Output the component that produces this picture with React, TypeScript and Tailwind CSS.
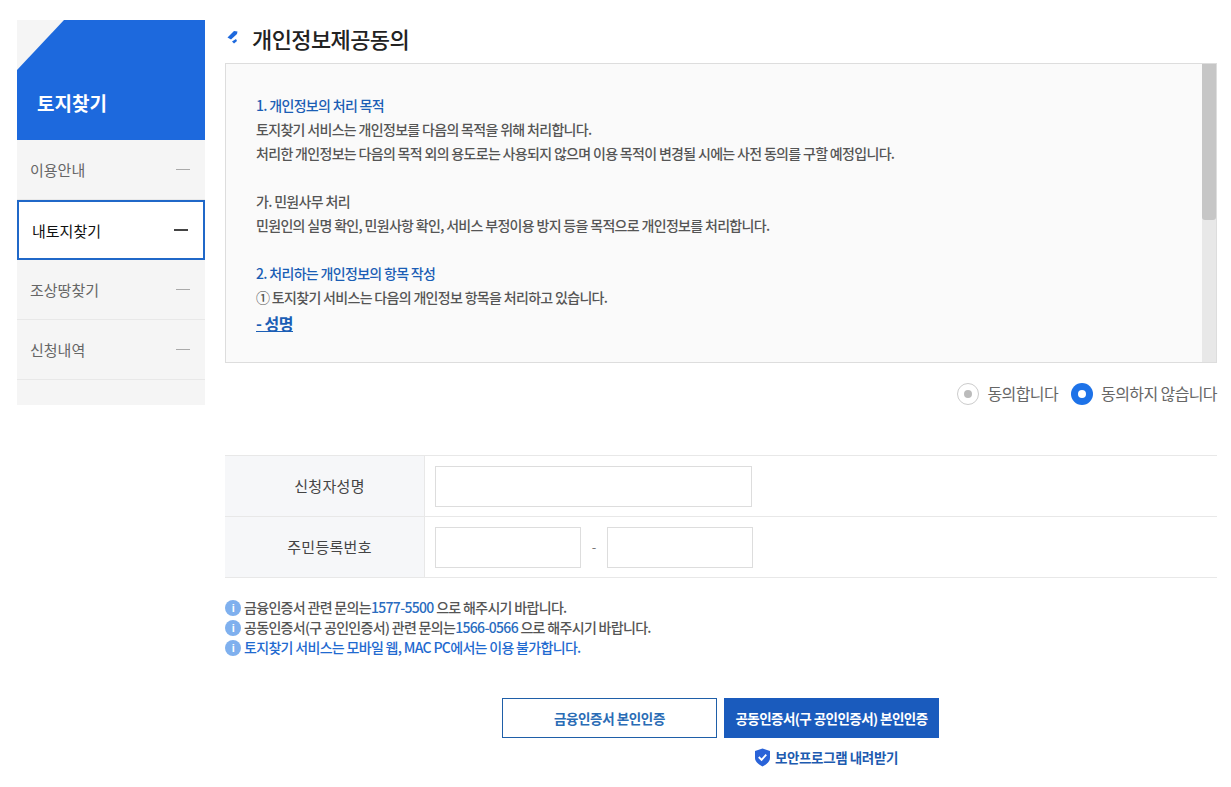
const font = "font-['Noto_Sans_CJK_KR','Noto_Sans',sans-serif]";

const menus = [
  { label: "이용안내", active: false },
  { label: "내토지찾기", active: true },
  { label: "조상땅찾기", active: false },
  { label: "신청내역", active: false },
];

function Sidebar() {
  return (
    <aside className="w-[188px] shrink-0 bg-[#f5f5f5] pb-[25px]">
      <div className="h-[120px] bg-[#1d69dd] [clip-path:polygon(47px_0,100%_0,100%_100%,0_100%,0_50px)] pt-[69px] pl-[20px] text-[19px] leading-[28px] font-bold text-white">
        토지찾기
      </div>
      {menus.map((m) =>
        m.active ? (
          <div
            key={m.label}
            className="flex h-[60px] items-center justify-between border-2 border-[#2068c8] bg-white pr-[15px] pl-[13px] text-[15px] text-[#111]"
          >
            <span className="pt-[2px]">{m.label}</span>
            <span className="h-[2px] w-[14px] bg-[#444]" />
          </div>
        ) : (
          <div
            key={m.label}
            className="flex h-[60px] items-center justify-between border-b border-[#e8e8e8] pr-[15px] pl-[13px] text-[15px] text-[#666]"
          >
            <span className="pt-[2px]">{m.label}</span>
            <span className="h-[1px] w-[14px] bg-[#aaa]" />
          </div>
        ),
      )}
    </aside>
  );
}

function Title() {
  return (
    <div className="flex h-[43px] items-start pt-[2px] pl-[2px]">
      <svg width="12" height="14" viewBox="0 0 12 14" className="mt-[8px]">
        <path d="M0.5 7.5 L7 1 L10.5 1.5 L10 4 L4 9.5 Z" fill="#1d69dd" />
        <path d="M5 11.5 L9 9 L10 11 L7 13.5 Z" fill="#1d69dd" />
      </svg>
      <h2 className="ml-[13px] text-[22px] leading-[32px] font-medium tracking-[-0.6px] text-[#222]">
        개인정보제공동의
      </h2>
    </div>
  );
}

function Terms() {
  return (
    <div className="flex h-[300px] border border-[#ddd] bg-[#fafafa]">
      <div className="flex-1 pt-[29px] pl-[30px] text-[14px] leading-[24px] font-medium tracking-[-0.68px] text-[#555]">
        <p className="text-[#1b5eb5]">1. 개인정보의 처리 목적</p>
        <p>토지찾기 서비스는 개인정보를 다음의 목적을 위해 처리합니다.</p>
        <p>처리한 개인정보는 다음의 목적 외의 용도로는 사용되지 않으며 이용 목적이 변경될 시에는 사전 동의를 구할 예정입니다.</p>
        <p className="mt-[24px]">가. 민원사무 처리</p>
        <p>민원인의 실명 확인, 민원사항 확인, 서비스 부정이용 방지 등을 목적으로 개인정보를 처리합니다.</p>
        <p className="mt-[24px] text-[#1b5eb5]">2. 처리하는 개인정보의 항목 작성</p>
        <p>① 토지찾기 서비스는 다음의 개인정보 항목을 처리하고 있습니다.</p>
        <p className="mt-[2px] text-[16px] font-bold tracking-[-0.5px] text-[#1b5eb5] underline">- 성명</p>
      </div>
      <div className="w-[14px] bg-[#e8e8e8]">
        <div className="h-[156px] rounded-b-[3px] bg-[#c6c6c6]" />
      </div>
    </div>
  );
}

function Agree() {
  return (
    <div className="mt-[20px] flex h-[22px] items-center justify-end text-[16px] leading-[22px] tracking-[-0.6px] text-[#666]">
      <span className="flex h-[22px] w-[22px] items-center justify-center rounded-full border border-[#ccc] bg-white">
        <span className="h-[8px] w-[8px] rounded-full bg-[#bbb]" />
      </span>
      <span className="mr-[13px] ml-[8px] pb-[2px]">동의합니다</span>
      <span className="flex h-[22px] w-[22px] items-center justify-center rounded-full bg-[#1d72e8]">
        <span className="h-[8px] w-[8px] rounded-full bg-white" />
      </span>
      <span className="ml-[8px] pb-[2px]">동의하지 않습니다</span>
    </div>
  );
}

function Field({ w }: { w: string }) {
  return <input className={`h-[41px] border border-[#ddd] bg-white ${w}`} />;
}

function FormTable() {
  return (
    <div className="mt-[50px] border-t border-[#e8e8e8]">
      <div className="flex h-[61px] border-b border-[#e8e8e8]">
        <div className="flex w-[200px] items-center justify-center border-r border-[#e8e8e8] bg-[#f6f7f9] pl-[10px] text-[15px] tracking-[0.3px] text-[#444]">
          신청자성명
        </div>
        <div className="flex items-center pl-[10px]">
          <Field w="w-[317px]" />
        </div>
      </div>
      <div className="flex h-[61px] border-b border-[#e8e8e8]">
        <div className="flex w-[200px] items-center justify-center border-r border-[#e8e8e8] bg-[#f6f7f9] pl-[10px] text-[15px] tracking-[0.3px] text-[#444]">
          주민등록번호
        </div>
        <div className="flex items-center pl-[10px]">
          <Field w="w-[146px]" />
          <span className="w-[26px] text-center text-[13px] text-[#777]">-</span>
          <Field w="w-[146px]" />
        </div>
      </div>
    </div>
  );
}

function InfoIcon() {
  return (
    <span className="mr-[3px] flex h-[16px] w-[16px] shrink-0 items-center justify-center rounded-full bg-[#7fb0ee] font-['Liberation_Sans',sans-serif] text-[11px] leading-none font-bold text-white">
      i
    </span>
  );
}

function Notices() {
  return (
    <div className="mt-[20px] text-[14px] leading-[20px] font-medium tracking-[-0.68px] text-[#555]">
      <p className="flex h-[20px] items-center">
        <InfoIcon />
        <span className="pb-[2px]">
          금융인증서 관련 문의는<span className="text-[#2a6cc0]">1577-5500</span> 으로 해주시기 바랍니다.
        </span>
      </p>
      <p className="flex h-[20px] items-center">
        <InfoIcon />
        <span className="pb-[2px]">
          공동인증서(구 공인인증서) 관련 문의는<span className="text-[#2a6cc0]">1566-0566</span> 으로 해주시기 바랍니다.
        </span>
      </p>
      <p className="flex h-[20px] items-center text-[#1f6ad0]">
        <InfoIcon />
        <span className="pb-[2px]">토지찾기 서비스는 모바일 웹, MAC PC에서는 이용 불가합니다.</span>
      </p>
    </div>
  );
}

function Buttons() {
  return (
    <div className="mt-[40px] flex flex-col items-center pr-[1px]">
      <div className="flex gap-[7px]">
        <button className="h-[40px] w-[215px] border border-[#1f5fa8] bg-white text-[13.5px] font-bold tracking-[-0.4px] text-[#2a6cb5]">
          금융인증서 본인인증
        </button>
        <button className="h-[40px] w-[215px] bg-[#1a5bbd] text-[13.5px] font-bold tracking-[-0.55px] text-white">
          공동인증서(구 공인인증서) 본인인증
        </button>
      </div>
      <div className="mt-[8px] ml-[212px] flex items-center gap-[5px] text-[13.5px] leading-[22px] font-bold tracking-[-0.4px] text-[#1d5bb0]">
        <svg width="15" height="19" viewBox="0 0 16 19">
          <path d="M8 0 L16 2.5 V10 C16 14 12 17 8 19 C4 17 0 14 0 10 V2.5 Z" fill="#2a63d8" />
          <path d="M4 9 L7 12 L12 6.5" fill="none" stroke="#fff" strokeWidth="2" />
        </svg>
        보안프로그램 내려받기
      </div>
    </div>
  );
}

export default function App() {
  return (
    <div className={`flex min-h-[787px] items-start gap-[20px] bg-white pt-[20px] pr-[14px] pl-[17px] ${font}`}>
      <Sidebar />
      <main className="flex-1">
        <Title />
        <Terms />
        <Agree />
        <FormTable />
        <Notices />
        <Buttons />
      </main>
    </div>
  );
}
